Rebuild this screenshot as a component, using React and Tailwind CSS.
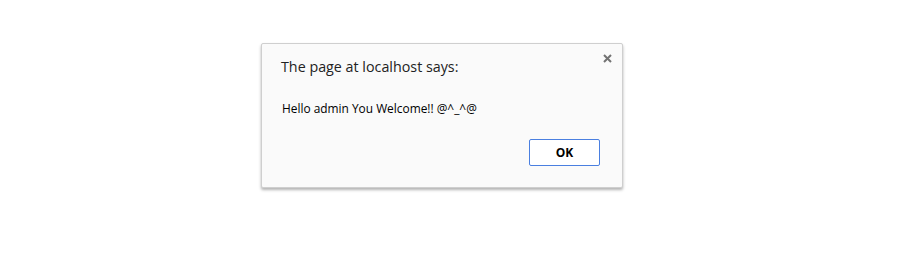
export default function App() {
    return (
        <div className="w-[918px] h-[261px] bg-white pt-[43px] pl-[261px]" style={{ fontFamily: '"Open Sans", "Noto Sans", sans-serif' }}>
            {/* alert dialog */}
            <div className="relative w-[362px] h-[145px] bg-[#fafafa] border border-[#cfcfcf] rounded-[2px] shadow-[0_2px_3px_rgba(0,0,0,0.3)] flex flex-col">
                <button className="absolute top-[8px] right-[9px] w-[12px] h-[12px] flex items-center justify-center text-[#7a7a7a]">
                    <svg width="9" height="9" viewBox="0 0 9 9">
                        <path d="M1 1 L8 8 M8 1 L1 8" stroke="#737373" strokeWidth="2" />
                    </svg>
                </button>
                <div className="pl-[19px] pt-[12px] text-[14.3px] leading-[22px] text-[#222]">
                    The page at localhost says:
                </div>
                <div className="pl-[20px] pt-[22px] text-[11.9px] leading-[16px] text-black">
                    Hello admin You Welcome!! @^_^@
                </div>
                <div className="flex justify-end pr-[22px] mt-auto mb-[21px]">
                    <button className="w-[71px] h-[27px] bg-white border border-[#4a7fe0] rounded-[2px] text-[12px] font-bold text-black">
                        OK
                    </button>
                </div>
            </div>
        </div>
    );
}
